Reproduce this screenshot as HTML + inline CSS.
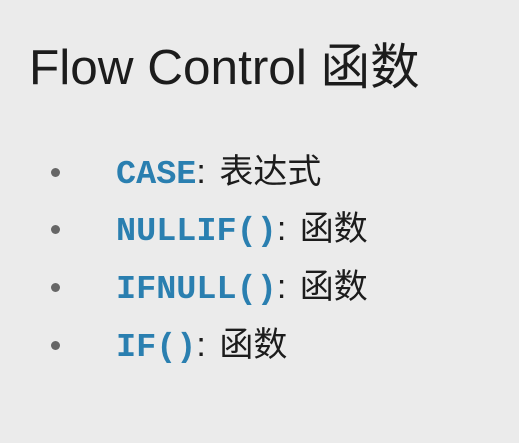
<!DOCTYPE html>
<html><head><meta charset="utf-8"><style>
html,body{margin:0;padding:0;}
body{width:519px;height:443px;background:#ebebeb;position:relative;overflow:hidden;font-family:"Liberation Sans","Noto Sans CJK SC",sans-serif;color:#1c1c1c;}
.t{position:absolute;left:29px;top:40px;font-size:49.5px;line-height:56px;white-space:nowrap;}
.d{position:absolute;left:51px;width:9px;height:9px;border-radius:50%;background:#666;}
.l{position:absolute;left:116px;font-size:34px;line-height:40px;white-space:nowrap;}
code{font-family:"Liberation Mono",monospace;font-weight:bold;color:#2a7fb0;font-size:33.5px;}
.c{margin-left:4px;}
</style></head><body>
<div class="t">Flow Control 函数</div>
<div class="d" style="top:168px"></div><div class="l" style="top:152px"><code>CASE</code>: <span class="c">表达式</span></div>
<div class="d" style="top:225px"></div><div class="l" style="top:209px"><code>NULLIF()</code>: <span class="c">函数</span></div>
<div class="d" style="top:283px"></div><div class="l" style="top:267px"><code>IFNULL()</code>: <span class="c">函数</span></div>
<div class="d" style="top:341px"></div><div class="l" style="top:325px"><code>IF()</code>: <span class="c">函数</span></div>
</body></html>
